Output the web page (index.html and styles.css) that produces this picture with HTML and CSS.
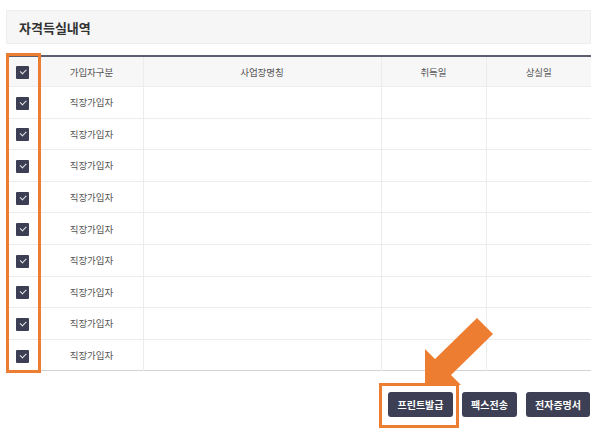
FILE: index.html
```html
<!DOCTYPE html>
<html lang="ko">
<head>
    <meta charset="UTF-8">
    <meta name="viewport" content="width=device-width, initial-scale=1.0">
    <title>자격득실내역</title>
    <link rel="stylesheet" href="styles.css">
</head>
<body>

    <div class="page">
        <!-- Title -->
        <div class="title-box">
            <h2>자격득실내역</h2>
        </div>

        <!-- History table -->
        <table class="history">
            <colgroup>
                <col class="col-check">
                <col class="col-type">
                <col class="col-name">
                <col class="col-date">
                <col class="col-date">
            </colgroup>
            <thead>
                <tr>
                    <th><span class="chk"></span></th>
                    <th>가입자구분</th>
                    <th>사업장명칭</th>
                    <th>취득일</th>
                    <th>상실일</th>
                </tr>
            </thead>
            <tbody id="rows"></tbody>
        </table>

        <!-- Buttons -->
        <div class="btn-row">
            <button class="btn btn-print">프린트발급</button>
            <button class="btn btn-fax">팩스전송</button>
            <button class="btn btn-cert">전자증명서</button>
        </div>

        <!-- Highlight overlays -->
        <div class="mark mark-check"></div>
        <div class="mark mark-print"></div>
        <svg class="arrow" width="600" height="438" viewBox="0 0 600 438">
            <polygon points="477,318 435,359 425,349 425,385 461,385 451,375 493,334" fill="#ed7d31"/>
        </svg>
    </div>

    <script>
        const rowCount = 9;
        let rowsHTML = '';
        for (let i = 0; i < rowCount; i++) {
            rowsHTML += `<tr>
                <td><span class="chk"></span></td>
                <td>직장가입자</td>
                <td></td><td></td><td></td>
            </tr>`;
        }
        document.getElementById('rows').innerHTML = rowsHTML;
    </script>

</body>
</html>
```

FILE: styles.css
```css
body {
    margin: 0;
    padding: 0;
    background-color: #ffffff;
    font-family: "Noto Sans CJK KR", "Noto Sans", sans-serif;
    color: #555;
}

.page {
    position: relative;
    width: 600px;
    height: 438px;
    padding: 10px 9px 0 6px;
    box-sizing: border-box;
}

.title-box {
    height: 34px;
    background-color: #f6f6f6;
    border: 1px solid #eeeeee;
    box-sizing: border-box;
    display: flex;
    align-items: center;
    padding-left: 12px;
}

.title-box h2 {
    margin: 0;
    font-size: 13px;
    font-weight: bold;
    color: #333;
}

.history {
    margin-top: 11px;
    width: 585px;
    border-collapse: collapse;
    table-layout: fixed;
    border-top: 2px solid #5c5f70;
    border-bottom: 1px solid #d4d4d4;
}

.history th, .history td {
    padding: 0;
    text-align: center;
    font-size: 9.5px;
    font-weight: normal;
    color: #555;
    border-left: 1px solid #ececec;
    border-bottom: 1px solid #ececec;
}

.history th:first-child, .history td:first-child {
    border-left: none;
}

.history th {
    height: 29px;
    background-color: #f7f7f7;
}

.history td {
    height: 30.6px;
}

.history tbody tr:last-child td {
    border-bottom: none;
}

.col-check { width: 34px; }
.col-type { width: 103px; }
.col-name { width: 238px; }
.col-date { width: 105px; }

.chk {
    display: inline-block;
    width: 13px;
    height: 13px;
    background-color: #3c3e53;
    border-radius: 1px;
    position: relative;
    vertical-align: middle;
}

.chk::after {
    content: "";
    position: absolute;
    left: 4px;
    top: 3px;
    width: 5px;
    height: 2.5px;
    border-left: 1.2px solid #e8e8ee;
    border-bottom: 1.2px solid #e8e8ee;
    transform: rotate(-45deg);
}

.btn-row {
    display: flex;
    justify-content: flex-end;
    gap: 9px;
    margin-top: 21px;
    padding-right: 1px;
}

.btn {
    height: 25px;
    padding: 0;
    font-family: "Noto Sans CJK KR", sans-serif;
    font-size: 10px;
    font-weight: bold;
    color: #ffffff;
    background-color: #3d4054;
    border: none;
    border-radius: 3px;
    cursor: pointer;
}

.btn-print { width: 65px; }
.btn-fax { width: 55px; }
.btn-cert { width: 64px; }

/* Orange highlight marks */
.mark {
    position: absolute;
    border: 3px solid #ed7d31;
    box-sizing: border-box;
    pointer-events: none;
}

.mark-check {
    left: 6px;
    top: 53px;
    width: 35px;
    height: 320px;
}

.mark-print {
    left: 379px;
    top: 383px;
    width: 80px;
    height: 45px;
}

.arrow {
    position: absolute;
    left: 0;
    top: 0;
    pointer-events: none;
}
```
